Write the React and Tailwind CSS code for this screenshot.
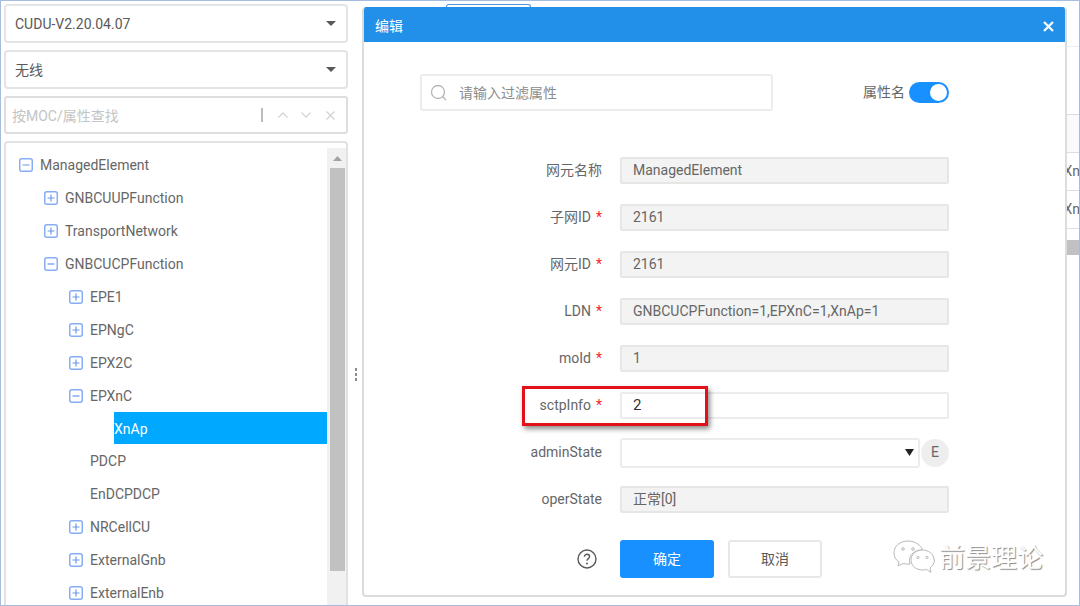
import React from "react";

const FONT = "font-['Roboto','Noto_Sans_CJK_SC',sans-serif]";

function Caret({ className = "" }) {
  return (
    <svg width="10" height="5" viewBox="0 0 10 5" className={className}>
      <path d="M0 0h10L5 5z" fill="#595959" />
    </svg>
  );
}

function SelectBox({ label }) {
  return (
    <div className="h-[39px] mb-[7px] flex items-center justify-between pl-[9px] pr-[10px] bg-white border-2 border-[#e4e4e4] rounded-[4px] text-[14px] text-[#595959]">
      <span className="pt-[2px]">{label}</span>
      <Caret />
    </div>
  );
}

function TreeIcon({ open }) {
  return (
    <svg width="14" height="14" viewBox="0 0 14 14" className="shrink-0">
      <rect x="0.75" y="0.75" width="12.5" height="12.5" rx="2" fill="#fff" stroke="#86aef7" strokeWidth="1.5" />
      <path d={open ? "M3.5 7h7" : "M3.5 7h7M7 3.5v7"} stroke="#6f97e8" strokeWidth="1.2" />
    </svg>
  );
}

const TREE = [
  { t: "ManagedElement", l: 0, i: "open" },
  { t: "GNBCUUPFunction", l: 1, i: "plus" },
  { t: "TransportNetwork", l: 1, i: "plus" },
  { t: "GNBCUCPFunction", l: 1, i: "open" },
  { t: "EPE1", l: 2, i: "plus" },
  { t: "EPNgC", l: 2, i: "plus" },
  { t: "EPX2C", l: 2, i: "plus" },
  { t: "EPXnC", l: 2, i: "open" },
  { t: "XnAp", l: 3, sel: true },
  { t: "PDCP", l: 2 },
  { t: "EnDCPDCP", l: 2 },
  { t: "NRCellCU", l: 2, i: "plus" },
  { t: "ExternalGnb", l: 2, i: "plus" },
  { t: "ExternalEnb", l: 2, i: "plus" },
];

const PAD = ["pl-[13px]", "pl-[38px]", "pl-[63px]", "pl-[108px]"];

function TreeRow({ row }) {
  if (row.sel) {
    return (
      <div className={`h-[33px] flex items-center ${PAD[3]}`}>
        <div className="h-[32px] w-full bg-[#00a8ff] flex items-center text-white text-[14px]">
          <span className="pt-[2px]">{row.t}</span>
        </div>
      </div>
    );
  }
  return (
    <div className={`h-[33px] shrink-0 flex items-center text-[14px] text-[#666666] ${PAD[row.l]}`}>
      {row.i ? <TreeIcon open={row.i === "open"} /> : <span className="w-[14px] shrink-0" />}
      <span className="ml-[7px] pt-[2px]">{row.t}</span>
    </div>
  );
}

function Scrollbar() {
  return (
    <div className="w-[19px] shrink-0 bg-[#f1f1f1] pl-[3px] flex flex-col">
      <div className="h-[20px] w-[15px] flex items-center justify-center">
        <svg width="9" height="5" viewBox="0 0 9 5"><path d="M0 5h9L4.500 0z" fill="#a3a3a3" /></svg>
      </div>
      <div className="w-[15px] h-[403px] bg-[#c1c1c1]" />
    </div>
  );
}

function Left() {
  return (
    <div className="w-[344px] shrink-0 ml-[3px] pt-[3px] flex flex-col h-full">
      <SelectBox label="CUDU-V2.20.04.07" />
      <SelectBox label="无线" />
      <div className="h-[38px] mb-[7px] flex items-center pl-[6px] pr-[11px] bg-white border-2 border-[#dedede] rounded-[3px] text-[14px] text-[#c4c4c4]">
        <span className="flex-1 pt-[2px]">按MOC/属性查找</span>
        <span className="w-[2px] h-[14px] bg-[#bdbdbd] mr-[15px]" />
        <svg width="10" height="6" viewBox="0 0 10 6" className="mr-[13px]"><path d="M0.500 5.500 5 1l4.500 4.500" fill="none" stroke="#d4d4d4" strokeWidth="1.3" /></svg>
        <svg width="10" height="6" viewBox="0 0 10 6" className="mr-[15px]"><path d="M0.500 0.500 5 5l4.500-4.500" fill="none" stroke="#d4d4d4" strokeWidth="1.3" /></svg>
        <svg width="9" height="9" viewBox="0 0 9 9"><path d="M0.500 0.500l8 8M8.500 0.500l-8 8" stroke="#d4d4d4" strokeWidth="1.3" /></svg>
      </div>
      <div className="flex-1 min-h-0 bg-white border-2 border-b-0 border-[#e2e2e2] rounded-t-[4px] pt-[5px] flex overflow-hidden">
        <div className="flex-1 min-w-0 flex flex-col">
          {TREE.map((r) => <TreeRow key={r.t} row={r} />)}
        </div>
        <Scrollbar />
      </div>
    </div>
  );
}

function Field({ label, req, value, disabled, children }) {
  return (
    <div className="h-[47px] flex items-center">
      <div className="w-[256px] text-right text-[14px] text-[#666666] pr-[18px] shrink-0">
        {label}
        {req && <span className="text-[#f5222d] ml-[5px]">*</span>}
      </div>
      {children || (
        <div className={`w-[329px] h-[27px] rounded-[2px] border-2 flex items-center pl-[11px] ${disabled ? "bg-[#f3f3f3] border-[#e6e6e6] text-[14px] text-[#666666]" : "bg-white border-[#ececec] text-[15px] text-[#333333]"}`}>
          {value}
        </div>
      )}
    </div>
  );
}

function Dialog() {
  return (
    <div className="absolute left-[361px] top-[6px] w-[705px] h-[590px] bg-white border-2 border-t-0 border-[#dcdcdc] rounded-[4px] flex flex-col overflow-hidden">
      <div className="h-[35px] shrink-0 bg-[#228fe9] flex items-center justify-between pl-[11px] pr-[11px] text-white text-[14px]">
        <span className="pt-[3px]">编辑</span>
        <svg width="11" height="11" viewBox="0 0 11 11" className="mt-[3px]"><path d="M1 1l9 9M10 1l-9 9" stroke="#f3f8fd" strokeWidth="2.4" /></svg>
      </div>
      <div className="flex items-center pt-[32px] pl-[56px]">
        <div className="w-[353px] h-[37px] border-2 border-[#ececec] rounded-[3px] flex items-center pl-[8px] text-[14px] text-[#8c8c8c]">
          <svg width="18" height="18" viewBox="0 0 18 18" className="mr-[11px]">
            <circle cx="8" cy="8" r="6.500" fill="none" stroke="#b5b5b5" strokeWidth="1.3" />
            <path d="M12.800 12.800l3.200 3.200" stroke="#b5b5b5" strokeWidth="1.3" />
          </svg>
          <span className="pt-[1px]">请输入过滤属性</span>
        </div>
        <span className="ml-[90px] text-[14px] text-[#666666]">属性名</span>
        <div className="ml-[4px] w-[40px] h-[21px] rounded-full bg-[#1890ff] flex items-center justify-end pr-[2px]">
          <span className="w-[17px] h-[17px] rounded-full bg-white" />
        </div>
      </div>
      <div className="mt-[36px] flex flex-col">
        <Field label="网元名称" value="ManagedElement" disabled />
        <Field label="子网ID" req value="2161" disabled />
        <Field label="网元ID" req value="2161" disabled />
        <Field label="LDN" req value="GNBCUCPFunction=1,EPXnC=1,XnAp=1" disabled />
        <Field label="moId" req value="1" disabled />
        <Field label="sctpInfo" req value="2" />
        <Field label="adminState">
          <div className="flex items-center">
            <div className="w-[300px] h-[30px] rounded-[3px] border-2 border-[#ececec] flex items-center justify-end pr-[4px]">
              <svg width="9" height="7" viewBox="0 0 9 7"><path d="M0 0h9L4.500 7z" fill="#222" /></svg>
            </div>
            <div className="ml-[1px] w-[28px] h-[28px] rounded-full bg-[#eeeeee] flex items-center justify-center text-[14px] text-[#666666]">E</div>
          </div>
        </Field>
        <Field label="operState" value="正常[0]" disabled />
      </div>
      <div className="mt-[17px] pl-[213px] flex items-center">
        <svg width="20" height="20" viewBox="0 0 20 20">
          <circle cx="10" cy="10" r="9" fill="none" stroke="#595959" strokeWidth="1.400" />
          <path d="M7.400 7.800c0-1.600 1.200-2.600 2.600-2.600s2.600 1 2.600 2.400c0 2-2.600 2-2.600 4.200" fill="none" stroke="#595959" strokeWidth="1.400" />
          <circle cx="10" cy="14.600" r="1" fill="#595959" />
        </svg>
        <div className="ml-[23px] w-[94px] h-[38px] rounded-[3px] bg-[#1890ff] text-white text-[14px] flex items-center justify-center">确定</div>
        <div className="ml-[14px] w-[94px] h-[38px] rounded-[3px] bg-white border-2 border-[#e8e8e8] text-[#595959] text-[14px] flex items-center justify-center">取消</div>
      </div>
    </div>
  );
}

function Behind() {
  return (
    <div className="flex-1 min-w-0 flex h-full">
      <div className="w-[16px] shrink-0 flex items-center justify-center">
        <span className="flex flex-col gap-[2px] mt-[142px]">
          <i className="block w-[2px] h-[3px] bg-[#8c8c8c]" />
          <i className="block w-[2px] h-[3px] bg-[#8c8c8c]" />
          <i className="block w-[2px] h-[3px] bg-[#8c8c8c]" />
        </span>
      </div>
      <div className="flex-1 min-w-0 flex flex-col overflow-hidden">
        <div className="h-[3px] shrink-0" />
        <div className="h-[3px] w-[85px] ml-[82px] shrink-0 bg-white border-t border-x border-[#4f97dc] rounded-t-[3px]" />
        <div className="h-[40px] shrink-0 border-b border-[#ededed]" />
        <div className="h-[68px] shrink-0 border-b border-[#dcdcdc]" />
        <div className="h-[38px] shrink-0 bg-[#fafafa] border-b border-[#dcdcdc]" />
        <div className="h-[38px] shrink-0 border-b border-[#dcdcdc] flex items-center justify-end text-[14px] text-[#666666] whitespace-nowrap overflow-hidden"><span className="mr-[-1px]">Xn</span></div>
        <div className="h-[38px] shrink-0 border-b border-[#dcdcdc] flex items-center justify-end text-[14px] text-[#666666] whitespace-nowrap overflow-hidden"><span className="mr-[-1px]">Xn</span></div>
        <div className="h-[11px] shrink-0" />
        <div className="h-[15px] shrink-0 ml-[12px] bg-[#c1c1c1]" />
      </div>
    </div>
  );
}

export default function App() {
  return (
    <div className={`relative w-[1080px] h-[606px] overflow-hidden bg-white border border-[#a6bddf] flex ${FONT}`}>
      <Left />
      <Behind />
      <Dialog />
      <div className="absolute left-[521px] top-[385px] w-[186px] h-[40px] border-[3px] border-[#e3101c] shadow-[2px_3px_5px_rgba(0,0,0,0.45)]" />
      <div className="absolute left-[891px] top-[539px] flex items-center">
        <svg width="44" height="36" viewBox="0 0 44 36" fill="#ffffff" stroke="#b9b9b9" strokeWidth="1">
          <path d="M16 1C8 1 2 6 2 13c0 4 2 7 5 9l-1 4 5-2.500c1.500.4 3 .6 5 .6 1 0 1.500 0 2-.1-.5-1.500-.5-2.500-.5-3.500 0-6 5.500-10.500 12-10.500h1C29 5 23 1 16 1z" />
          <path d="M42 20c0-6-5.500-10-11.500-10S19 14 19 20s5.500 10 11.500 10c1.500 0 3-.2 4-.6l4.500 3-1-4.400c2.500-2 4.500-4.800 4.500-8z" />
          <circle cx="11" cy="9" r="1.300" /><circle cx="21" cy="9" r="1.300" /><circle cx="26" cy="17.500" r="1.100" /><circle cx="35" cy="17.500" r="1.100" />
        </svg>
        <span className="ml-[3px] text-[26px] leading-none text-white [text-shadow:1px_1px_1px_#8a8a8a]">前景理论</span>
      </div>
    </div>
  );
}
